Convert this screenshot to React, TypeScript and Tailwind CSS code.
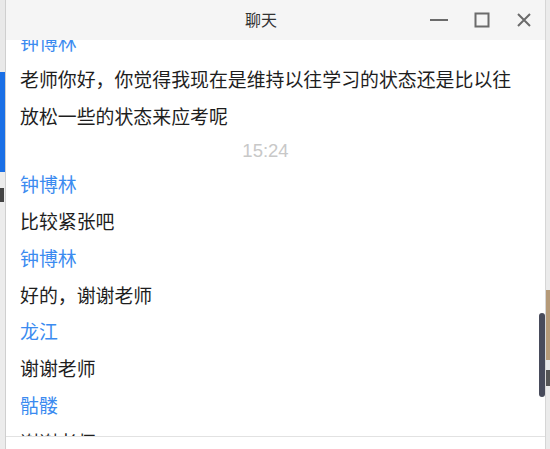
import React from "react";

const font = { fontFamily: '"Noto Sans CJK SC", "Noto Sans", sans-serif' };

function Name({ children }: { children: React.ReactNode }) {
  return <div className="h-[36px] leading-[36px] text-[#3b8bf0]">{children}</div>;
}
function Msg({ children }: { children: React.ReactNode }) {
  return <div className="leading-[37.5px] text-[#1e1e1e]">{children}</div>;
}

export default function App() {
  return (
    <div className="w-[550px] h-[449px] flex bg-[#ececec] overflow-hidden" style={font}>
      {/* left background strip */}
      <div className="w-[5px] flex flex-col">
        <div className="h-[72px] bg-[#e9e9e9]" />
        <div className="h-[100px] bg-[#1a6fe6]" />
        <div className="h-[16px] bg-[#ececec]" />
        <div className="h-[14px] w-[4px] bg-[#444]" />
        <div className="flex-1 bg-[#ececec]" />
      </div>
      {/* window */}
      <div className="w-[540px] h-full flex flex-col border-l border-[#cfcfcf] bg-white relative">
        <div className="h-[40px] shrink-0 bg-[#f5f5f5] flex items-center relative">
          <div className="absolute left-[239px] top-[8px] text-[16px] text-[#333] leading-[22px]">聊天</div>
          <div className="ml-auto flex items-center h-full">
            <svg width="18" height="16" viewBox="0 0 18 16" className="mr-[26px]">
              <line x1="0" y1="8" x2="18" y2="8" stroke="#6b6b6b" strokeWidth="2" />
            </svg>
            <svg width="16" height="16" viewBox="0 0 16 16" className="mr-[27px]">
              <rect x="1.5" y="1.5" width="13" height="13" fill="none" stroke="#6b6b6b" strokeWidth="2" />
            </svg>
            <svg width="14" height="14" viewBox="0 0 14 14" className="mr-[14px]">
              <path d="M1 1 L13 13 M13 1 L1 13" stroke="#6b6b6b" strokeWidth="2" />
            </svg>
          </div>
        </div>
        <div className="h-[396px] overflow-hidden relative">
          <div className="pl-[14px] pr-[10px] mt-[-16.5px] text-[18.9px]">
            <Name>钟博林</Name>
            <Msg>
              老师你好，你觉得我现在是维持以往学习的状态还是比以往
              <br />
              放松一些的状态来应考呢
            </Msg>
            <div className="h-[31.5px] leading-[31.5px] pr-[24px] text-center text-[#c8c8c8] text-[18.5px]" style={{ fontFamily: '"Liberation Sans", "Noto Sans CJK SC", sans-serif' }}>
              15:24
            </div>
            <Name>钟博林</Name>
            <Msg>比较紧张吧</Msg>
            <Name>钟博林</Name>
            <Msg>好的，谢谢老师</Msg>
            <Name>龙江</Name>
            <Msg>谢谢老师</Msg>
            <Name>骷髅</Name>
            <Msg>谢谢老师</Msg>
          </div>
          <div className="absolute right-0 top-[273px] w-[6px] h-[84px] rounded-[3px] bg-[#484b5b]" />
        </div>
        <div className="flex-1 border-t border-[#e2e2e2] bg-white" />
      </div>
      {/* right background strip */}
      <div className="flex-1 flex flex-col border-l border-[#d6d6d6]">
        <div className="h-[290px] bg-[#ebebeb]" />
        <div className="h-[70px] bg-[#b59a78]" />
        <div className="h-[10px] bg-[#e8e8e8]" />
        <div className="h-[16px] bg-[#555]" />
        <div className="flex-1 bg-[#ebebeb]" />
      </div>
    </div>
  );
}
